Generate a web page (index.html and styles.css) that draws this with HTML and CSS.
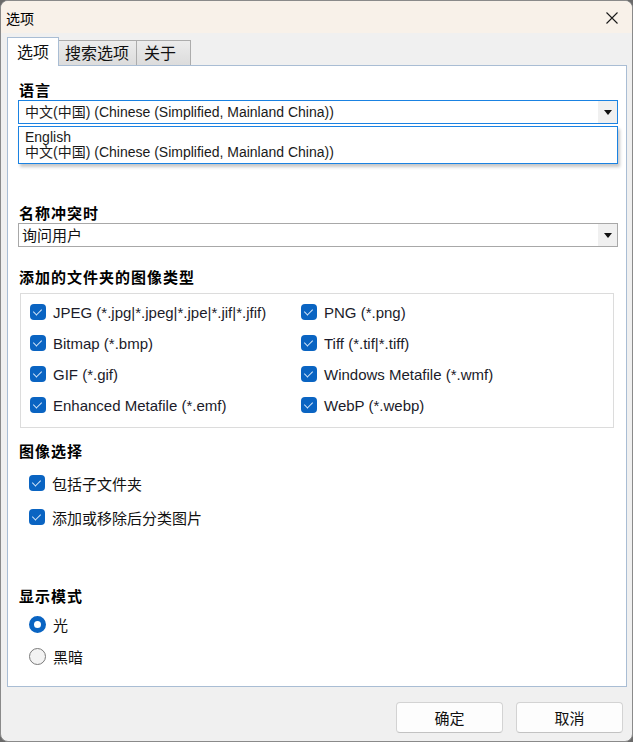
FILE: index.html
```html
<!DOCTYPE html>
<html lang="zh-CN">
<head>
<meta charset="utf-8">
<title>选项</title>
<link rel="stylesheet" href="styles.css">
</head>
<body>
<div class="window">
  <div class="titlebar">
    <span class="title">选项</span>
    <svg class="close" width="12" height="12" viewBox="0 0 12 12"><path d="M0.5 0.5 L11.5 11.5 M11.5 0.5 L0.5 11.5" stroke="#1a1a1a" stroke-width="1.1" fill="none"/></svg>
  </div>
  <div class="client">
    <div class="tabs">
      <div class="tab active">选项</div>
      <div class="tab">搜索选项</div>
      <div class="tab">关于</div>
    </div>
    <div class="panel">
      <section class="sec sec-lang">
        <div class="heading">语言</div>
        <div class="select focused">
          <span class="select-text latin">中文(中国) (Chinese (Simplified, Mainland China))</span>
          <span class="arrow-btn"><svg width="8" height="5" viewBox="0 0 8 5"><polygon points="0,0 8,0 4,5" fill="#111"/></svg></span>
        </div>
        <div class="dropdown latin">
          <div class="dd-item">English</div>
          <div class="dd-item">中文(中国) (Chinese (Simplified, Mainland China))</div>
        </div>
      </section>

      <section class="sec sec-conflict">
        <div class="heading">名称冲突时</div>
        <div class="select">
          <span class="select-text cjk">询问用户</span>
          <span class="arrow-btn"><svg width="8" height="5" viewBox="0 0 8 5"><polygon points="0,0 8,0 4,5" fill="#111"/></svg></span>
        </div>
      </section>

      <section class="sec sec-types">
        <div class="heading">添加的文件夹的图像类型</div>
        <div class="group">
          <label class="check"><span class="box"></span>JPEG (*.jpg|*.jpeg|*.jpe|*.jif|*.jfif)</label>
          <label class="check"><span class="box"></span>PNG (*.png)</label>
          <label class="check"><span class="box"></span>Bitmap (*.bmp)</label>
          <label class="check"><span class="box"></span>Tiff (*.tif|*.tiff)</label>
          <label class="check"><span class="box"></span>GIF (*.gif)</label>
          <label class="check"><span class="box"></span>Windows Metafile (*.wmf)</label>
          <label class="check"><span class="box"></span>Enhanced Metafile (*.emf)</label>
          <label class="check"><span class="box"></span>WebP (*.webp)</label>
        </div>
      </section>

      <section class="sec sec-select">
        <div class="heading">图像选择</div>
        <div class="list">
          <label class="check cjk-label"><span class="box"></span>包括子文件夹</label>
          <label class="check cjk-label"><span class="box"></span>添加或移除后分类图片</label>
        </div>
      </section>

      <section class="sec sec-mode">
        <div class="heading">显示模式</div>
        <div class="list radios">
          <label class="radio cjk-label"><span class="dot on"></span>光</label>
          <label class="radio cjk-label"><span class="dot"></span>黑暗</label>
        </div>
      </section>
    </div>
    <div class="footer">
      <button class="btn">确定</button>
      <button class="btn">取消</button>
    </div>
  </div>
</div>
</body>
</html>
```

FILE: styles.css
```css
html, body {
  margin: 0;
  padding: 0;
  background: #6a6a6a;
}
body {
  width: 633px;
  height: 742px;
  font-family: "Liberation Sans", "Noto Sans CJK SC", sans-serif;
  color: #1a1a1a;
}
.window {
  box-sizing: border-box;
  width: 633px;
  height: 742px;
  border: 1px solid #8a8a8a;
  border-radius: 8px;
  overflow: hidden;
  background: #f0f0f0;
  display: flex;
  flex-direction: column;
}
.titlebar {
  height: 32px;
  flex: none;
  background: #f8f1e9;
  display: flex;
  align-items: center;
  justify-content: space-between;
  padding: 0 14px 0 5px;
}
.title {
  font-family: "Noto Sans CJK SC", sans-serif;
  font-size: 14px;
  line-height: 20px;
  color: #000;
  margin-top: 1px;
}
.close {
  display: block;
  margin-top: 1px;
}
.client {
  flex: 1;
  display: flex;
  flex-direction: column;
}
.tabs {
  display: flex;
  align-items: flex-end;
  margin: 4px 0 0 6px;
  height: 28px;
  position: relative;
  z-index: 2;
}
.tab {
  box-sizing: border-box;
  height: 25px;
  border: 1px solid #acacac;
  border-bottom: none;
  background: linear-gradient(#ececec, #dcdcdc);
  font-family: "Noto Sans CJK SC", sans-serif;
  font-size: 16px;
  line-height: 23px;
  color: #111;
  margin-left: -1px;
}
.tab.active {
  width: 52px;
  height: 29px;
  margin-left: 0;
  margin-bottom: -1px;
  background: #fff;
  border-color: #a9bdd4;
  padding: 0 0 0 9px;
  line-height: 27px;
  position: relative;
  z-index: 3;
}
.tab.active + .tab { margin-left: 0; border-left: none; }
.tab:nth-child(2) { width: 78px; padding: 0 0 0 6px; }
.tab:nth-child(3) { width: 55px; padding: 0 0 0 7px; }

.panel {
  box-sizing: border-box;
  height: 622px;
  margin: 0 5px 0 6px;
  border: 1px solid #a9bdd4;
  background: #fff;
  padding: 14px 8px 0 10px;
  display: flex;
  flex-direction: column;
  flex: none;
}
.sec { position: relative; }
.heading {
  font-family: "Noto Sans CJK SC", sans-serif;
  font-weight: bold;
  font-size: 15px;
  letter-spacing: 1px;
  line-height: 20px;
  padding-left: 1px;
  color: #000;
}
.select {
  box-sizing: border-box;
  height: 24px;
  border: 1px solid #a8a8a8;
  display: flex;
  align-items: center;
  justify-content: space-between;
  background: #fff;
}
.select.focused { border-color: #1a82e2; }
.select-text { white-space: nowrap; }
.latin {
  font-family: "Liberation Sans", "Noto Sans CJK SC", sans-serif;
  font-size: 14px;
  color: #1a1a1a;
}
.select-text.latin { padding-left: 6px; line-height: 20px; }
.select-text.cjk {
  font-family: "Noto Sans CJK SC", sans-serif;
  font-size: 15px;
  line-height: 20px;
  padding-left: 3px;
  color: #111;
}
.arrow-btn {
  width: 19px;
  height: 22px;
  background: #f0f0f0;
  display: flex;
  align-items: center;
  justify-content: center;
}
.arrow-btn svg { display: block; margin-left: 1px; }
.dropdown {
  position: absolute;
  left: 0;
  right: 0;
  top: 46px;
  box-sizing: border-box;
  height: 38px;
  border: 1px solid #1a82e2;
  background: #fff;
  padding: 3px 0 0 6px;
  box-shadow: 2px 3px 3px rgba(0, 0, 0, 0.22);
  z-index: 5;
}
.dd-item { line-height: 15px; white-space: nowrap; }
.sec-conflict { margin-top: 79px; }
.sec-types { margin-top: 20px; }
.group {
  margin: 6px 4px 0 2px;
  box-sizing: border-box;
  border: 1px solid #dcdcdc;
  padding: 6px 0 10px 9px;
  display: grid;
  grid-template-columns: 271px 1fr;
  grid-auto-rows: 24px;
  row-gap: 7px;
}
.check, .radio {
  display: flex;
  align-items: center;
  font-size: 15px;
  color: #1b1b2a;
  white-space: nowrap;
}
.box {
  width: 16px;
  height: 16px;
  border-radius: 4px;
  background: #0a64c2;
  margin-right: 7px;
  flex: none;
  position: relative;
}
.box::after {
  content: "";
  position: absolute;
  left: 5px;
  top: 3px;
  width: 4px;
  height: 7px;
  border-right: 1px solid #d8e8fa;
  border-bottom: 1px solid #d8e8fa;
  transform: rotate(45deg);
}
.sec-select { margin-top: 13px; }
.list {
  display: flex;
  flex-direction: column;
  gap: 10px;
  margin-top: 10px;
  padding-left: 11px;
}
.list .check, .list .radio { height: 24px; }
.cjk-label {
  font-family: "Noto Sans CJK SC", sans-serif;
  font-size: 15px;
  color: #111;
}
.sec-mode { margin-top: 57px; }
.radios { margin-top: 6px; gap: 8px; }
.dot {
  box-sizing: border-box;
  width: 17px;
  height: 17px;
  border-radius: 50%;
  border: 1px solid #7a7a7a;
  background: #f3f3f3;
  margin-right: 7px;
  flex: none;
}
.dot.on {
  border: 5px solid #0a64c2;
  background: #fff;
}
.footer {
  flex: 1;
  display: flex;
  justify-content: flex-end;
  align-items: flex-start;
  gap: 13px;
  padding: 15px 9px 0 0;
}
.btn {
  box-sizing: border-box;
  width: 107px;
  height: 31px;
  border: 1px solid #d3d3d3;
  border-bottom-color: #c2c2c2;
  border-radius: 4px;
  background: #fdfdfd;
  font-family: "Noto Sans CJK SC", sans-serif;
  font-size: 15px;
  color: #111;
  padding: 0;
  line-height: 28px;
}
```
